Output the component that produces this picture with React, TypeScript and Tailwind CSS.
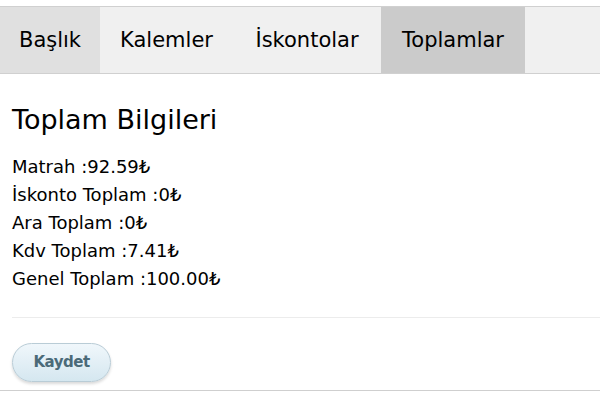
import React, { useState } from 'react';

const tabs = [
  { label: 'Başlık', w: 'w-[100px]' },
  { label: 'Kalemler', w: 'w-[133px]' },
  { label: 'İskontolar', w: 'w-[148px]' },
  { label: 'Toplamlar', w: 'w-[144px]' },
];

const totals = [
  { label: 'Matrah', value: '92.59' },
  { label: 'İskonto Toplam', value: '0' },
  { label: 'Ara Toplam', value: '0' },
  { label: 'Kdv Toplam', value: '7.41' },
  { label: 'Genel Toplam', value: '100.00' },
];

export default function App() {
  const [active, setActive] = useState('Toplamlar');

  return (
    <div className="w-[600px] h-[409px] bg-white pt-[6px] font-['DejaVu_Sans',sans-serif] text-black">
      {/* Tab bar */}
      <div className="flex h-[68px] border-y border-[#d0d0d0] bg-[#f0f0f0]">
        {tabs.map((t, i) => (
          <button
            key={t.label}
            onClick={() => setActive(t.label)}
            className={`${t.w} text-center text-[21px] pt-[1px] ${
              active === t.label ? 'bg-[#cbcbcb]' : i === 0 ? 'bg-[#e0e0e0]' : ''
            }`}
          >
            {t.label}
          </button>
        ))}
      </div>

      {/* Totals panel */}
      <div className="pl-[12px]">
        <h2 className="mt-[29px] text-[27px] leading-[34px]">Toplam Bilgileri</h2>
        <div className="mt-[16px] text-[18px] leading-[28px]">
          {totals.map((r) => (
            <div key={r.label}>
              {r.label} :{r.value}₺
            </div>
          ))}
        </div>
        <div className="mt-[24px] border-t border-[#ececec]" />
        <div className="pt-[25px] pb-[8px]">
          <button className="h-[39px] w-[99px] rounded-full border border-[#b9ccd6] bg-gradient-to-b from-[#f0f7fb] to-[#d5e7f0] text-[15px] tracking-[-0.5px] font-bold text-[#4b6a78] shadow-[0_2px_3px_rgba(0,0,0,0.15)]">
            Kaydet
          </button>
        </div>
      </div>
      <div className="border-t border-[#cfcfcf]" />
    </div>
  );
}
